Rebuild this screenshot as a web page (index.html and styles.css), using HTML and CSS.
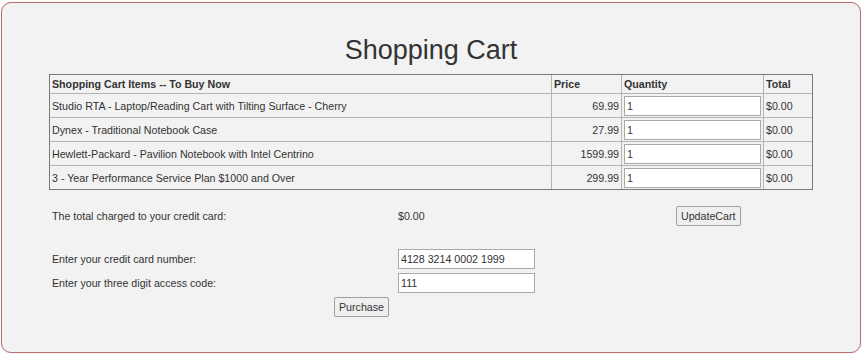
FILE: index.html
```html
<!DOCTYPE html>
<html lang="en">
<head>
    <meta charset="UTF-8">
    <meta name="viewport" content="width=device-width, initial-scale=1.0">
    <title>Shopping Cart</title>
    <link rel="stylesheet" href="styles.css">
</head>
<body>

<div class="cart-box">
    <h1>Shopping Cart</h1>

    <table class="cart-table">
        <tr>
            <th class="col-item">Shopping Cart Items -- To Buy Now</th>
            <th class="col-price">Price</th>
            <th class="col-qty">Quantity</th>
            <th class="col-total">Total</th>
        </tr>
        <tr>
            <td>Studio RTA - Laptop/Reading Cart with Tilting Surface - Cherry</td>
            <td class="price">69.99</td>
            <td><input type="text" class="qty" value="1"></td>
            <td>$0.00</td>
        </tr>
        <tr>
            <td>Dynex - Traditional Notebook Case</td>
            <td class="price">27.99</td>
            <td><input type="text" class="qty" value="1"></td>
            <td>$0.00</td>
        </tr>
        <tr>
            <td>Hewlett-Packard - Pavilion Notebook with Intel Centrino</td>
            <td class="price">1599.99</td>
            <td><input type="text" class="qty" value="1"></td>
            <td>$0.00</td>
        </tr>
        <tr>
            <td>3 - Year Performance Service Plan $1000 and Over</td>
            <td class="price">299.99</td>
            <td><input type="text" class="qty" value="1"></td>
            <td>$0.00</td>
        </tr>
    </table>

    <div class="checkout">
        <div class="row row-total">
            <div class="label">The total charged to your credit card:</div>
            <div class="value">$0.00</div>
            <button class="btn">UpdateCart</button>
        </div>

        <div class="row row-card">
            <label class="label" for="cardNumber">Enter your credit card number:</label>
            <input type="text" id="cardNumber" class="field" value="4128 3214 0002 1999">
        </div>

        <div class="row row-code">
            <label class="label" for="accessCode">Enter your three digit access code:</label>
            <input type="text" id="accessCode" class="field" value="111">
        </div>

        <div class="row row-buy">
            <div class="label buy-cell">
                <button class="btn">Purchase</button>
            </div>
        </div>
    </div>
</div>

</body>
</html>
```

FILE: styles.css
```css
body {
    font-family: "Liberation Sans", Arial, sans-serif;
    font-size: 8pt;
    color: #333;
    margin: 0;
    padding: 0;
    background-color: #fff;
}
.cart-box {
    margin: 2px 1px;
    height: 351px;
    box-sizing: border-box;
    border: 1px solid #b9706e;
    border-radius: 10px;
    box-shadow: 0 0 1px rgba(150, 60, 60, 0.4);
    background-color: #f2f2f2;
    padding: 0 47px;
    overflow: hidden;
}
h1 {
    font-size: 27px;
    font-weight: normal;
    text-align: center;
    line-height: 31px;
    margin: 32px 0 8px;
}
.cart-table {
    width: 764px;
    border-collapse: collapse;
    outline: 1px solid #7a7a7a;
    outline-offset: -1px;
}
.cart-table th,
.cart-table td {
    border: 1px solid #b4b4b4;
    padding: 2px 2px 1px;
    text-align: left;
    line-height: 13px;
}
.cart-table th {
    padding: 3px 2px 2px;
    font-weight: bold;
}
.col-item { width: 497px; }
.col-price { width: 65px; }
.col-qty { width: 137px; }
.price {
    text-align: right !important;
}
.qty {
    width: 137px;
    height: 20px;
    box-sizing: border-box;
    border: 1px solid #a9a9a9;
    background: #fff;
    font: 8pt "Liberation Sans", Arial, sans-serif;
    color: #333;
    padding: 1px 2px;
    margin: 0;
    display: block;
}
.checkout {
    margin-top: 14px;
}
.row {
    display: flex;
    align-items: center;
    height: 23px;
}
.label {
    width: 346px;
    padding-left: 3px;
    box-sizing: border-box;
}
.value {
    width: 281px;
    padding-left: 3px;
    box-sizing: border-box;
}
.row-card {
    margin-top: 20px;
}
.row-code {
    margin-top: 1px;
}
.row-buy {
    margin-top: 1px;
}
.buy-cell {
    display: flex;
    justify-content: flex-end;
    padding-right: 6px;
}
.field {
    width: 137px;
    height: 20px;
    box-sizing: border-box;
    border: 1px solid #a9a9a9;
    background: #fff;
    font: 8pt "Liberation Sans", Arial, sans-serif;
    color: #333;
    padding: 1px 2px;
    margin: 0 0 0 3px;
}
.btn {
    font: 8pt "Liberation Sans", Arial, sans-serif;
    color: #333;
    background-color: #efefef;
    border: 1px solid #a0a0a0;
    border-radius: 2px;
    padding: 2px 4px;
    height: 20px;
    cursor: pointer;
}
.btn:hover {
    background-color: #e5e5e5;
}
```
